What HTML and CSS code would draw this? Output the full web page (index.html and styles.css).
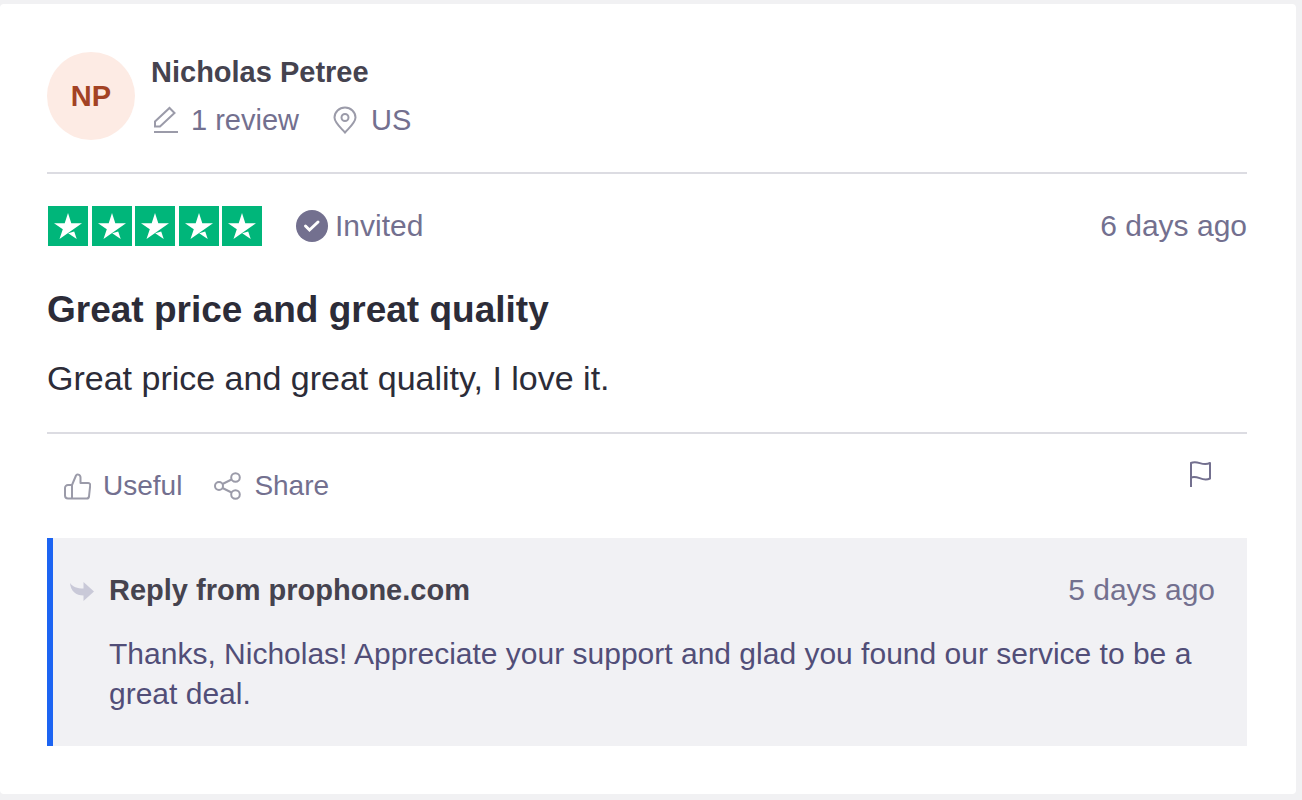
FILE: index.html
```html
<!DOCTYPE html>
<html lang="en">
<head>
    <meta charset="UTF-8">
    <title>Great price and great quality</title>
    <link rel="stylesheet" href="styles.css">
</head>
<body>
<svg class="defs" width="0" height="0">
    <symbol id="star" viewBox="0 0 40 40">
        <rect width="40" height="40" fill="#00b67a"/>
        <path fill="#fff" d="M20 7l3.300 10.200H34L11.500 33l3.300-9.800L6 17.200h10.700z"/>
        <path fill="#fff" d="M20.200 27.200l6-1.800 2.500 7.600z"/>
    </symbol>
</svg>

<article class="card">
    <header class="user">
        <div class="avatar">NP</div>
        <div class="info">
            <h3>Nicholas Petree</h3>
            <div class="details">
                <span class="detail">
                    <svg width="28" height="28" viewBox="0 0 28 28" fill="none" stroke="#9b9ba9" stroke-width="2">
                        <path d="M3 26h24M4 15.500L18.500 2l5 5L9 20.500H4z"/>
                    </svg>
                    1 review
                </span>
                <span class="detail">
                    <svg width="28" height="28" viewBox="0 0 28 28" fill="none" stroke="#9b9ba9" stroke-width="2">
                        <path d="M14 26.500C9 21 3.500 16.500 3.500 11.500a10.500 10 0 0 1 21 0C24.500 16.500 19 21 14 26.500z"/>
                        <circle cx="14" cy="11.500" r="3.500"/>
                    </svg>
                    US
                </span>
            </div>
        </div>
    </header>

    <section class="review">
        <div class="rating">
            <div class="stars" role="img" aria-label="Rated 5 out of 5 stars">
                <svg><use href="#star"/></svg>
                <svg><use href="#star"/></svg>
                <svg><use href="#star"/></svg>
                <svg><use href="#star"/></svg>
                <svg><use href="#star"/></svg>
            </div>
            <div class="invited">
                <svg width="32" height="32" viewBox="0 0 32 32" fill="none">
                    <circle cx="16" cy="16" r="16" fill="#73708f"/>
                    <path d="M9.500 16l4 4 8.500-8" stroke="#fff" stroke-width="3" stroke-linecap="round"/>
                </svg>
                Invited
            </div>
            <time class="date">6 days ago</time>
        </div>
        <h2>Great price and great quality</h2>
        <p>Great price and great quality, I love it.</p>
    </section>

    <div class="actions">
        <button type="button">
            <svg width="28" height="28" viewBox="0 0 28 28" fill="none" stroke="#9b9ba9" stroke-width="2" stroke-linejoin="round">
                <path d="M9 13l4-9.500c.7-1.800 4.500-1.200 4.500 2V11h7.500c1.500 0 2.300 1 2.200 2.300L26 24.500c-.2 1.300-1 2-2.300 2H5c-1.700 0-3-1.300-3-3V16c0-1.700 1.300-3 3-3zM9 13v13.500"/>
            </svg>
            Useful
        </button>
        <button type="button">
            <svg width="28" height="28" viewBox="0 0 28 28" fill="none" stroke="#9b9ba9" stroke-width="2">
                <circle cx="5" cy="14" r="4"/>
                <circle cx="21.500" cy="5.500" r="4.300"/>
                <circle cx="21.500" cy="22.500" r="4.300"/>
                <path d="M8.500 12L17.500 7.500M8.500 16l9 4.500"/>
            </svg>
            Share
        </button>
        <button type="button" class="flag" aria-label="Report review">
            <svg width="28" height="28" viewBox="0 0 28 28" fill="none" stroke="#73708f" stroke-width="2" stroke-linejoin="round">
                <path d="M4 27V3c7-3.500 11 4 19 0v15.500c-8 4-12-4-19-1"/>
            </svg>
        </button>
    </div>

    <section class="reply">
        <svg class="arrow" width="26" height="20" viewBox="0 0 26 20">
            <path fill="#c9c9d8" d="M1 1c3 4 7 5.500 13.500 5.500V0L25 9.500 14.500 19v-5.500C7 13.500 1.500 9 1 1z"/>
        </svg>
        <div class="content">
            <div class="top">
                <h3>Reply from prophone.com</h3>
                <time class="date">5 days ago</time>
            </div>
            <p>Thanks, Nicholas! Appreciate your support and glad you found our service to be a great deal.</p>
        </div>
    </section>
</article>
</body>
</html>
```

FILE: styles.css
```css
* { margin: 0; padding: 0; box-sizing: border-box;}
body {
    padding: 4px 6px 6px 0;
    background-color: #f1f1f3;
    font-family: "Liberation Sans", Arial, sans-serif;
    font-size: 30px;
    line-height: 40px;
    color: #73708f;
}
svg { display: block; flex: none;}
.defs { position: absolute;}
.card {
    padding: 48px 49px 48px 47px;
    background-color: #fff;
    border-radius: 4px;
}
h3 {
    font-size: 29px;
    color: #45434f;
}

/* user */
.user {
    display: flex;
    gap: 16px;
    padding-bottom: 32px;
    border-bottom: 2px solid #dcdce2;
}
.avatar {
    flex: none;
    width: 88px;
    height: 88px;
    border-radius: 50%;
    background-color: #fdebe4;
    color: #a34224;
    font-size: 29px;
    font-weight: bold;
    line-height: 88px;
    text-align: center;
}
.details {
    display: flex;
    gap: 32px;
    padding-top: 8px;
}
.detail {
    display: flex;
    align-items: center;
    gap: 12px;
    font-size: 29px;
}

/* review */
.review {
    padding: 32px 0;
    border-bottom: 2px solid #dcdce2;
}
.rating {
    display: flex;
    align-items: center;
}
.stars {
    display: flex;
    justify-content: space-between;
    width: 215px;
    padding-left: 1px;
}
.stars svg {
    width: 40px;
    height: 40px;
}
.invited {
    display: flex;
    align-items: center;
    gap: 7px;
    margin-left: 34px;
}
.date { margin-left: auto;}
.review h2 {
    margin-top: 40px;
    font-size: 37px;
    line-height: 48px;
    color: #2c2c38;
}
.review p {
    margin-top: 24px;
    padding-bottom: 2px;
    font-size: 34px;
    color: #2c2c38;
}

/* buttons */
.actions {
    display: flex;
    gap: 32px;
    padding: 32px 32px 32px 16px;
}
.actions button {
    display: flex;
    align-items: center;
    gap: 12px;
    border: 0;
    background: none;
    font: inherit;
    font-size: 28px;
    color: inherit;
    cursor: pointer;
}
.actions .flag {
    align-self: flex-start;
    margin: -6px 0 0 auto;
}

/* reply */
.reply {
    display: flex;
    gap: 14px;
    padding: 32px 32px 32px 16px;
    border-left: 6px solid #1c64f2;
    background-color: #f1f1f4;
}
.arrow { margin-top: 12px;}
.content { flex: 1;}
.top {
    display: flex;
    align-items: center;
}
.reply p {
    margin-top: 24px;
    color: #514e78;
}
```
